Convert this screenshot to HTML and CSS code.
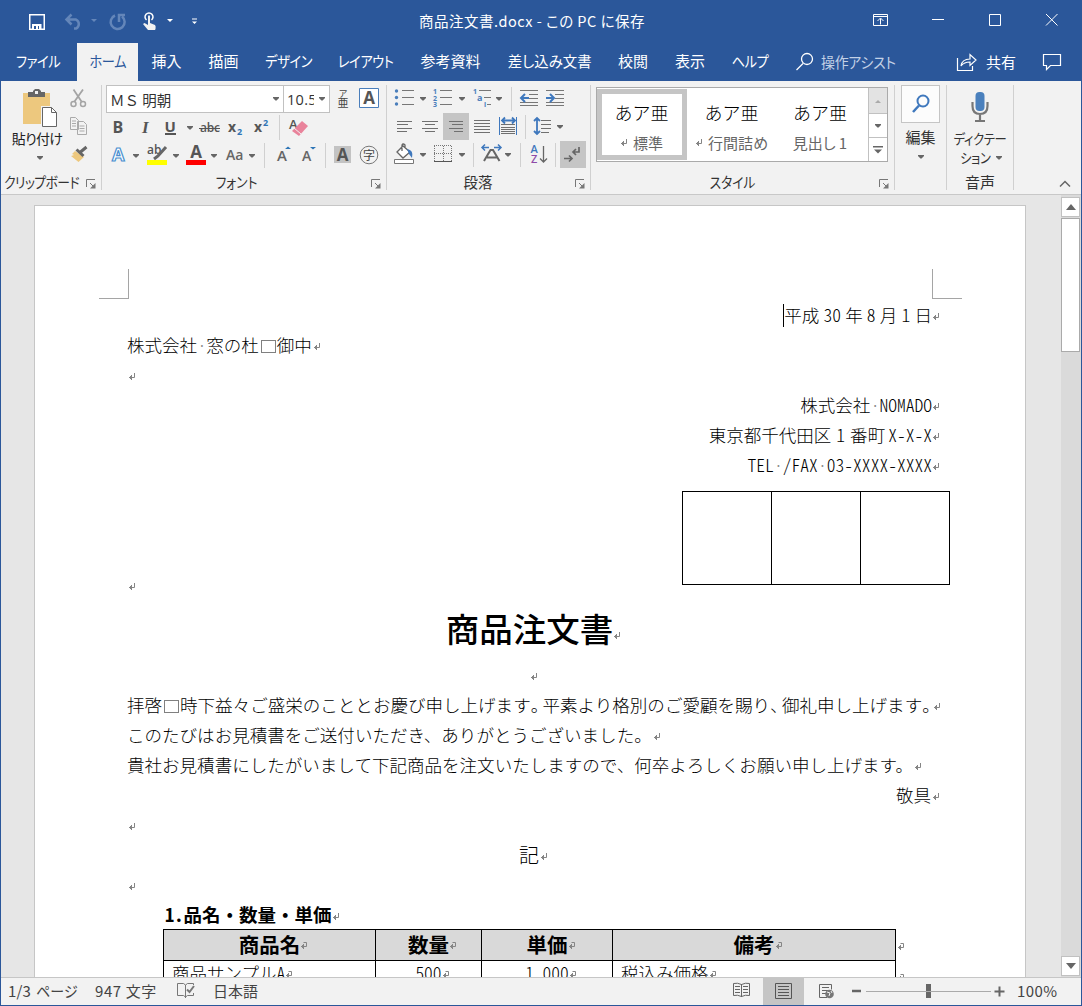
FILE: index.html
```
<!DOCTYPE html>
<html lang="ja">
<head>
<meta charset="utf-8">
<title>商品注文書.docx</title>
<link rel="stylesheet" href="styles.css">
</head>
<body>
<svg class="defs" width="0" height="0">
  <symbol id="ret" viewBox="0 0 8 8"><path d="M6.500 0V4.500H1M3.500 2v5M2.500 3v3" fill="none" stroke="#858585"/></symbol>
  <symbol id="cellret" viewBox="0 0 8 8"><path d="M3.500 .5h3v4H1M3.500 2v5M2.500 3v3" fill="none" stroke="#858585"/></symbol>
  <symbol id="dd" viewBox="0 0 6 4"><path d="M0 0h6v1L3.6 3.5H2.4L0 1z" fill="#666"/></symbol>
  <symbol id="launch" viewBox="0 0 10 10"><path d="M.5 8V.5H9M4 4l4 4" fill="none" stroke="#777"/><path d="M9.500 4v5.500H4z" fill="#777"/></symbol>
</svg>
<div class="window">
  <header class="titlebar">
    <svg width="400" height="43" viewBox="1 0 400 43" fill="none">
      <path d="M29.750 14.750h14.500v14.500h-14.500z" stroke="#fff" stroke-width="1.500"/><path d="M32 24h9.500v5.500H32z" fill="#fff"/><path d="M34 26h2v3h-2zM38 26h1v3h-1z" fill="#2b579a"/>
      <g stroke="#6486b9" stroke-width="2.500"><path d="M67 19.500h9a5 5 0 0 1 0 9h-2M71.500 14.500l-5 5 5 5"/><path d="M115 15.500a7 7 0 1 0 7 1M119 22v-7h6"/></g>
      <path d="M91 19h6l-3 3z" fill="#6486b9"/>
      <path d="M146.500 20a4 4 0 1 1 5 0" stroke="#fff" stroke-width="1.500"/><path d="M148 16q1-1.500 2 0v7l5 2q1 1 .5 4l-.5 1h-7l-5-6 1.500-1 3.500 2z" fill="#f2f2f2"/>
      <path d="M167 19h6l-3 3zM192 21.500h5l-2.500 2.500zM192 18.500h5v1h-5z" fill="#fff"/>
    </svg>
    <span class="doc-name">商品注文書.docx - この PC に保存</span>
    <svg width="219" height="43" viewBox="862 0 219 43" fill="none" stroke="#fff"><path d="M873.500 14.500h14v11h-14zM873.500 16.500h14M880.500 24.500v-6M877.500 21l3-3 3 3M932 19.500h12M989.500 14.500h11v11h-11zM1046 14l11.500 11.500M1057.500 14l-11.500 11.500"/></svg>
  </header>
  <nav class="tabs">
    <span class="tab t-file"><span class="k">ファイル</span></span><span class="tab t-home"><span class="k">ホーム</span></span><span class="tab t-2">挿入</span><span class="tab t-2">描画</span><span class="tab t-design"><span class="k">デザイン</span></span><span class="tab t-layout"><span class="k">レイアウト</span></span><span class="tab t-ref">参考資料</span><span class="tab t-mail"><span class="k w">差し込み文書</span></span><span class="tab t-review">校閲</span><span class="tab t-view">表示</span><span class="tab t-help"><span class="k">ヘルプ</span></span>
    <span class="assist"><svg width="20" height="20" fill="none" stroke="#fff" stroke-width="1.300"><circle cx="12" cy="7" r="5.500"/><path d="M8 11.500L1.500 18"/></svg><span class="k lft">操作アシスト</span></span>
    <span class="share"><svg width="21" height="20" fill="none" stroke="#fff" stroke-width="1.200"><path d="M1.500 6v12.500h15V14"/><path d="M5 14q1-7 9-7V2.500l6 5.500-6 5.500V10q-6 0-9 4z"/></svg><span>共有</span></span>
    <svg class="comment" width="20" height="18" fill="none" stroke="#fff" stroke-width="1.200"><path d="M1.500 1.500h17v11h-10l-4 4v-4h-3z"/></svg>
  </nav>

  <section class="ribbon">
    <div class="group g-clip">
      <div class="clip-body">
        <div class="paste">
          <svg width="38" height="40" viewBox="22 88 38 40"><path d="M24 93h27v31H24z" fill="#edc87e"/><path d="M29 92h5v-1l2-2h4l2 2v1h4v5H29z" fill="#666"/><path d="M36 91h3v3h-3z" fill="#f2f2f2"/><path d="M42 106h11l6 6v16H42z" fill="#f2f2f2"/><path d="M43.500 107.500h9l5 5v14h-14z" fill="#fff" stroke="#666"/><path d="M52.500 107.500v5h5" fill="none" stroke="#666"/></svg>
          <span class="paste-label">貼り付け</span>
          <svg width="6" height="4"><use href="#dd"/></svg>
        </div>
        <svg width="20" height="84" viewBox="69 85 20 84" fill="none">
          <g stroke="#a4a4a4" stroke-width="1.800"><path d="M73.500 89.500l8 12M83 89.500l-8.500 12"/><circle cx="73.500" cy="104" r="2.500" stroke-width="1.500"/><circle cx="83" cy="104" r="2.500" stroke-width="1.500"/></g>
          <path d="M70.500 117.500h5l3 3v9h-8zM77.500 121.500h6l3 3v10h-9z" stroke="#aaa" fill="#f2f2f2"/><path d="M72 121h4M72 123.500h4M72 126h4M79.500 126h5M79.500 128.500h5M79.500 131h5" stroke="#aaa"/>
          <path d="M75 151l9 6-5.500 5-7.500-6 3-1-2-1z" fill="#edc87e"/><path d="M76.500 149.500l7 6.500M80.500 152l6-5" stroke="#666" stroke-width="3"/>
        </svg>
      </div>
      <div class="caption"><span class="k">クリップボード</span><svg width="10" height="10"><use href="#launch"/></svg></div>
    </div>

    <div class="group g-font">
      <div class="row">
        <span class="combo name"><span>ＭＳ 明朝</span><svg width="6" height="4"><use href="#dd"/></svg></span><span class="combo size"><span class="num">10.5</span><svg width="6" height="4"><use href="#dd"/></svg></span>
        <svg width="56" height="28" viewBox="330 85 56 28"><g class="jp" text-anchor="middle" fill="#444"><text x="343" y="97" font-size="9">ア</text><text x="343" y="107" font-size="11">亜</text></g><path d="M359.500 88.500h19v19h-19z" fill="#fff" stroke="#4a7ebb"/><text class="ui b" x="369" y="104" font-size="17" text-anchor="middle" fill="#555">A</text></svg>
      </div>
      <div class="row">
        <svg width="284" height="28" viewBox="102 113 284 28">
          <g fill="#555"><text class="ui b" x="112.500" y="133" font-size="16">B</text><text class="serif b i" x="142" y="133" font-size="17">I</text><text class="ui b" x="164.500" y="132" font-size="15">U</text><path d="M165 133h11v2h-11z"/>
          <text class="ui b2" x="200" y="132" font-size="12" textLength="20">abc</text><path d="M199 128h21v1h-21z"/><text class="ui b" x="228" y="132" font-size="14">x</text><text class="ui b" x="254" y="132" font-size="14">x</text></g>
          <g fill="#2e75b6"><text class="ui b" x="237" y="135" font-size="9">2</text><text class="ui b" x="263" y="126" font-size="9">2</text></g>
          <use href="#dd" x="187" y="126" width="6" height="4"/><path d="M279.500 115v25" stroke="#d0d0d0"/>
          <text class="ui b2" x="289" y="129" font-size="13" fill="#555">A</text><path d="M302 121l6 5-9 10-7-5z" fill="#e9839b"/><path d="M294 128l7 6" stroke="#f2f2f2"/>
        </svg>
      </div>
      <div class="row">
        <svg width="284" height="28" viewBox="102 141 284 28">
          <text class="ui b" x="112" y="161" font-size="18" fill="#fff" stroke="#4a90d0" stroke-width="1.200">A</text>
          <text class="ui b2" x="147" y="154" font-size="12" fill="#555">ab</text><path d="M166 147l-8 9-4 3" stroke="#666" stroke-width="3" fill="none"/><path d="M147 160h20v5h-20z" fill="#ff0"/>
          <text class="ui b" x="196" y="158" font-size="17" text-anchor="middle" fill="#555">A</text><path d="M186 160h20v5h-20z" fill="red"/>
          <text class="ui b2" x="226" y="160" font-size="14" fill="#666">Aa</text>
          <use href="#dd" x="133" y="154" width="6" height="4"/><use href="#dd" x="173" y="154" width="6" height="4"/><use href="#dd" x="211" y="154" width="6" height="4"/><use href="#dd" x="249" y="154" width="6" height="4"/>
          <path d="M264.500 143v25M325.500 143v25" stroke="#d0d0d0"/>
          <g class="ui b2" fill="#666"><text x="277" y="161" font-size="15">A</text><text x="302" y="161" font-size="14">A</text></g><path d="M285 149l3-2.500 3 2.500zM310 147h6l-3 2.500z" fill="#2e75b6"/>
          <path d="M334 146h17v17h-17z" fill="#c3c3c3"/><text class="ui b" x="342.500" y="160.500" font-size="17" text-anchor="middle" fill="#555">A</text>
          <circle cx="369" cy="155" r="8.800" fill="none" stroke="#777"/><text class="jp" x="369" y="159.500" font-size="12" text-anchor="middle" fill="#444">字</text>
        </svg>
      </div>
      <div class="caption"><span class="k">フォント</span><svg width="10" height="10"><use href="#launch"/></svg></div>
    </div>

    <div class="group g-para">
      <div class="row">
        <svg width="203" height="28" viewBox="387 85 203 28">
          <g fill="#4a7ebb"><circle cx="396.500" cy="91" r="1.700"/><circle cx="396.500" cy="97.500" r="1.700"/><circle cx="396.500" cy="104" r="1.700"/><g class="ui b" font-size="7"><text x="433" y="94">1</text><text x="433" y="100.500">2</text><text x="433" y="107">3</text><text x="473" y="94">1</text><text x="477" y="101" font-size="9">a</text><text x="484" y="107">i</text></g></g>
          <path d="M402 90.500h12M402 97.500h12M402 104.500h12M440 90.500h12M440 97.500h12M440 104.500h12M479 90.500h12M484 97.500h7M487 104.500h4M520 90.500h18M529 94.500h9M529 98.500h9M520 102.500h18M520 105.500h18M546 90.500h18M555 94.500h9M555 98.500h9M546 102.500h18M546 105.500h18" stroke="#777"/>
          <path d="M529 98h-8M525 94l-4 4 4 4M546 98h8M550 94l4 4-4 4" fill="none" stroke="#3f78bd" stroke-width="2"/>
          <use href="#dd" x="420" y="97" width="6" height="4"/><use href="#dd" x="459" y="97" width="6" height="4"/><use href="#dd" x="496" y="97" width="6" height="4"/><path d="M511.500 87v24" stroke="#d0d0d0"/>
        </svg>
      </div>
      <div class="row">
        <svg width="203" height="28" viewBox="387 113 203 28">
          <path d="M443 113h26v27h-26z" fill="#c5c5c5"/>
          <path d="M397 121.500h15M397 124.500h11M397 128.500h15M397 131.500h10M422 121.500h16M425 124.500h10M422 128.500h16M425 131.500h10M449 121.500h14M452 124.500h11M449 128.500h14M454 131.500h9M474 120.500h16M474 123.500h16M474 126.500h16M474 129.500h16M474 132.500h16M501 124.500h14M501 127.500h14M501 129.500h14M501 131.500h14M501 133.500h14M541 120.500h10M541 124.500h10M541 128.500h10M541 132.500h8" stroke="#707070"/>
          <path d="M499.500 117v18M516.500 117v18" stroke="#3f78bd"/><path d="M503 120.500h11M505 117.500l-3 3 3 3M512 117.500l3 3-3 3M537 118v15M534 121l3-3 3 3M534 131l3 3 3-3" fill="none" stroke="#3f78bd" stroke-width="1.800"/>
          <path d="M525.500 115v24" stroke="#d0d0d0"/><use href="#dd" x="557" y="125" width="6" height="4"/>
        </svg>
      </div>
      <div class="row">
        <svg width="203" height="28" viewBox="387 141 203 28">
          <path d="M394.500 159.500h19v4h-19z" fill="#fff" stroke="#777"/><path d="M397 152l6-6 7 6-7 6zM402 151v-6q1-2 3 0v2" fill="#fff" stroke="#666" stroke-width="1.300"/><path d="M407 149q7 1 5 9l-3-4z" fill="#3f78bd"/>
          <path d="M434.500 146v16M443.500 146v16M451.500 146v16M434 145.500h18M434 153.500h18" stroke="#777" stroke-dasharray="1 1" fill="none"/><path d="M434 161.500h18" stroke="#555"/>
          <path d="M484 161l6.500-11h2.500l6.500 11M487 157.500h10" fill="none" stroke="#666" stroke-width="2"/><path d="M482 147.500h7M485 144.500l-3 3 3 3M494 147.500h7M498 144.500l3 3-3 3" fill="none" stroke="#3f78bd" stroke-width="1.500"/>
          <text class="ui b2" x="530.500" y="153" font-size="11" fill="#3f78bd">A</text><text class="ui b2" x="531" y="163" font-size="11" fill="#8e4ba8">Z</text><path d="M543.500 146v16M540 158.500l3.500 3.500 3.500-3.500" fill="none" stroke="#666" stroke-width="1.300"/>
          <path d="M560 141h26v27h-26z" fill="#c5c5c5"/><path d="M579 147v5h-6M576 149l-3 3 3 3M564 158.500h7M569 155.500l3 3-3 3" fill="none" stroke="#666" stroke-width="1.700"/>
          <use href="#dd" x="420" y="153" width="6" height="4"/><use href="#dd" x="459" y="153" width="6" height="4"/><use href="#dd" x="505" y="153" width="6" height="4"/><path d="M473.500 143v24M520.500 143v24M555.500 143v24" stroke="#d0d0d0"/>
        </svg>
      </div>
      <div class="caption"><span>段落</span><svg width="10" height="10"><use href="#launch"/></svg></div>
    </div>

    <div class="group g-style">
      <div class="gallery">
        <div class="style-item on"><b>あア亜</b><span><svg width="8" height="8"><use href="#ret"/></svg>標準</span></div>
        <div class="style-item"><b>あア亜</b><span><svg width="8" height="8"><use href="#ret"/></svg>行間詰め</span></div>
        <div class="style-item"><b>あア亜</b><span>見出し 1</span></div>
        <div class="gal-nav"><i class="off"><svg width="6" height="4"><path d="M0 4h6L3 1z" fill="#aaa"/></svg></i><i><svg width="6" height="4"><use href="#dd"/></svg></i><i><svg width="10" height="8"><path d="M0 0h10v1.500H0zM1 3.500h8L5 7.500z" fill="#666"/></svg></i></div>
      </div>
      <div class="caption"><span class="k">スタイル</span><svg width="10" height="10"><use href="#launch"/></svg></div>
    </div>

    <div class="group g-edit">
      <span class="edit-box"><svg width="20" height="20" fill="none" stroke="#3f78bd" stroke-width="2"><circle cx="12" cy="7" r="5.500"/><path d="M8 11.500L2 18" stroke-width="2.500"/></svg></span>
      <span class="edit-label">編集</span><svg width="6" height="4"><use href="#dd"/></svg>
    </div>

    <div class="group g-voice">
      <svg width="18" height="31" viewBox="972 92 18 31" fill="none"><rect x="976.500" y="92" width="9" height="19" rx="4" fill="#4a80bd"/><path d="M973.500 102v4q0 8 7.500 8t7.500-8v-4M981 114v8M976 121h10" stroke="#777" stroke-width="2.200"/></svg>
      <span class="dict"><span class="k">ディクテー</span></span>
      <span class="dict second"><span class="k">ション</span><svg width="6" height="4"><use href="#dd"/></svg></span>
      <div class="caption"><span>音声</span></div>
    </div>
    <svg class="collapse" width="12" height="8" fill="none" stroke="#666" stroke-width="1.500"><path d="M1 6.500l5-5 5 5"/></svg>
  </section>

  <main class="workspace">
    <article class="page">
      <div class="corners"><i class="corner-l"></i><i class="corner-r"></i></div>
      <div class="text">
        <p class="r"><span class="caret"></span><span>平成<span class="half gap">30</span>年<span class="half gap">8</span>月<span class="half gap">1</span>日</span><svg class="m"><use href="#ret"/></svg></p>
        <p>株式会社<i class="dot">·</i>窓の杜<i class="fullspace"></i>御中<svg class="m far"><use href="#ret"/></svg></p>
        <p><svg class="m"><use href="#ret"/></svg></p>
        <p class="r">株式会社<i class="dot">·</i><span class="half">NOMADO</span><svg class="m"><use href="#ret"/></svg></p>
        <p class="r">東京都千代田区<span class="half gap one">1</span>番町<span class="half xs">X-X-X</span><svg class="m"><use href="#ret"/></svg></p>
        <p class="r"><span class="half">TEL</span><i class="dot">·</i><span class="half">/FAX</span><i class="dot">·</i><span class="half">03-XXXX-XXXX</span><svg class="m"><use href="#ret"/></svg></p>
        <div class="stamp-row"><p><svg class="m"><use href="#ret"/></svg></p><div class="stamps"><i></i><i></i><i></i></div></div>
        <h1>商品注文書<svg class="m"><use href="#ret"/></svg></h1>
        <p class="c"><svg class="m"><use href="#ret"/></svg></p>
        <p>拝啓<i class="fullspace"></i>時下益々ご盛栄のこととお慶び申し上げます<span class="tight">。</span>平素より格別のご愛顧を賜り<span class="tight">、</span>御礼申し上げます<span class="tight last">。</span><svg class="m"><use href="#ret"/></svg></p>
        <p>このたびはお見積書をご送付いただき、ありがとうございました。<svg class="m"><use href="#ret"/></svg></p>
        <p>貴社お見積書にしたがいまして下記商品を注文いたしますので、何卒よろしくお願い申し上げます。<svg class="m"><use href="#ret"/></svg></p>
        <p class="r">敬具<svg class="m"><use href="#ret"/></svg></p>
        <p><svg class="m"><use href="#ret"/></svg></p>
        <p class="c ki">記<svg class="m"><use href="#ret"/></svg></p>
        <p><svg class="m"><use href="#ret"/></svg></p>
        <h2><span class="half">1.</span>品名・数量・単価<svg class="m"><use href="#ret"/></svg></h2>
        <div class="items">
          <div class="th">商品名<svg class="m"><use href="#cellret"/></svg></div><div class="th">数量<svg class="m"><use href="#cellret"/></svg></div><div class="th">単価<svg class="m"><use href="#cellret"/></svg></div><div class="th">備考<svg class="m"><use href="#cellret"/></svg></div><div class="end"><svg class="m"><use href="#cellret"/></svg></div>
          <div class="td left">商品サンプル<span class="half">A</span><svg class="m"><use href="#cellret"/></svg></div><div class="td"><span class="half">500</span><svg class="m"><use href="#cellret"/></svg></div><div class="td"><span class="half">1,000</span><svg class="m"><use href="#cellret"/></svg></div><div class="td left">税込み価格<svg class="m"><use href="#cellret"/></svg></div><div class="end"><svg class="m"><use href="#cellret"/></svg></div>
        </div>
      </div>
    </article>
    <aside class="scroll">
      <i class="sb"><svg width="10" height="6"><path d="M0 6h10L5 0z" fill="#666"/></svg></i>
      <i class="thumb"></i>
      <i class="sb down"><svg width="10" height="6"><path d="M0 0h10L5 6z" fill="#666"/></svg></i>
    </aside>
  </main>

  <footer class="status">
    <span class="s-page"><span>1/3</span><span class="k lft">ページ</span></span><span class="s-words">947 文字</span>
    <svg class="proof" width="20" height="18" fill="none" stroke="#777"><path d="M9.500 3v13M9.500 3l-2-1.500h-6v12h6l2 1.500 2-1.500h6V11M9.500 3l2-1.500h6V3"/><path d="M11 7.500l2.500 2.500L18 4" stroke-width="2"/></svg>
    <span class="s-lang">日本語</span>
    <svg class="views" width="280" height="27" viewBox="730 978 280 27" fill="none">
      <path d="M763 978h41v27h-41z" fill="#c5c5c5"/>
      <path d="M741.500 984v13M741.500 984.500q-4-2-8-1v12q4-1 8 1 4-2 8-1v-12q-4-1-8 1M735 986.500h5M735 989.500h5M735 992.500h5M743 986.500h5M743 989.500h5M743 992.500h5" stroke="#666"/>
      <path d="M775.500 983.500h16v15h-16zM778 986.500h11M778 989.500h11M778 992.500h11M778 995.500h11" stroke="#555"/>
      <path d="M827 997.500h-7.500v-13h12v5M822 987.500h7M822 990.500h6M822 993.500h4" stroke="#666"/><circle cx="829.500" cy="994" r="4.300" fill="#777"/><path d="M827 992l3 1-1 3M831 991l1 2" stroke="#f2f2f2"/>
      <path d="M852 991h9" stroke="#666" stroke-width="2.500"/><path d="M867 991.500h96" stroke="#aaa"/><path d="M926 984h5v14h-5z" fill="#666"/>
      <path d="M866 991.500h125" stroke="#aaa"/><path d="M994.500 991.500h10M999.500 986.500v10" stroke="#666" stroke-width="2"/>
    </svg>
    <span class="zoom">100%</span>
  </footer>
</div>
</body>
</html>
```
FILE: styles.css
```
* { box-sizing: border-box; }
body { margin: 0; font-family: "Noto Sans CJK JP", sans-serif; font-size: 15px; color: #333; overflow: hidden; }
i { font-style: normal; }
p, h1, h2 { margin: 0; font-weight: inherit; }
svg { display: block; flex: none; }
.defs { position: absolute; }
.window { width: 1082px; height: 1006px; border: solid #2b579a; border-width: 0 1px 1px; display: flex; flex-direction: column; background: #f2f2f2; }
.ui { font-family: "Open Sans", sans-serif; }
.jp { font-family: "Noto Sans CJK JP", sans-serif; }
.serif { font-family: "Liberation Serif", serif; }
.b { font-weight: 700; }
.b2 { font-weight: 600; }
.i { font-style: italic; }
/* condensed kana, as in the system UI face */
.k { display: inline-block; transform: scaleX(.88); }
.k.w { transform: scaleX(.96); }
.k.lft { transform: scaleX(.93); transform-origin: left; }

.titlebar { height: 43px; flex: none; background: #2b579a; color: #fff; display: flex; justify-content: space-between; }
.doc-name { line-height: 41px; font-size: 14.5px; font-feature-settings: "palt"; letter-spacing: .5px; white-space: nowrap; margin: 0 auto 0 18px; }

.tabs { height: 38px; flex: none; background: #2b579a; color: #fff; display: flex; line-height: 36px; white-space: nowrap; }
.tab { text-align: center; font-feature-settings: "palt"; }
.t-file { width: 75px; }
.t-home { width: 61px; margin-left: 1px; background: #f2f2f2; color: #2b579a; }
.t-2 { width: 57px; }
.t-design { width: 73px; }
.t-layout { width: 82px; }
.t-ref { width: 87px; }
.t-mail { width: 111px; }
.t-review { width: 56px; }
.t-view { width: 58px; }
.t-help { width: 62px; }
.t-design, .t-layout, .t-file, .t-home, .t-help { letter-spacing: -.4px; }
.assist { display: flex; gap: 6px; align-items: center; margin-left: 14px; color: #c3d1e6; font-feature-settings: "palt"; letter-spacing: -.3px; }
.share { display: flex; gap: 9px; align-items: center; margin-left: auto; }
.comment { margin: 10px 19px 0 26px; }

.ribbon { height: 114px; flex: none; background: #f2f2f2; border-bottom: 1px solid #c8c8c8; display: flex; padding-top: 4px; font-feature-settings: "palt"; }
.group { height: 105px; border-right: 1px solid #d0d0d0; display: flex; flex-direction: column; }
.row { display: flex; height: 28px; flex: none; }
.caption { display: flex; margin-top: auto; height: 16px; align-items: center; line-height: 14px; font-size: 14.500px; color: #333; white-space: nowrap; }
.caption span { flex: 1; text-align: center; }
.caption svg { margin: 3px 5px 0 0; }
.g-clip { width: 101px; }
.g-clip .caption span { letter-spacing: -.6px; margin-left: -4px; }
.clip-body { display: flex; }
.paste { width: 68px; display: flex; flex-direction: column; align-items: center; padding: 3px 0 0 10px; }
.paste-label { font-size: 14px; line-height: 21px; height: 28px; letter-spacing: -.7px; white-space: nowrap; color: #222; margin-left: -6px; }
.g-font { width: 285px; }
.combo { height: 28px; background: #fff; border: 1px solid #c1c1c1; display: flex; align-items: center; justify-content: space-between; font-size: 14.5px; line-height: 25px; padding: 0 4px 0 3px; }
.combo.name { width: 178px; margin-left: 4px; font-feature-settings: normal; }
.combo.size { width: 46px; border-left: 0; }
.num { width: 27px; overflow: hidden; font-family: "Open Sans", sans-serif; letter-spacing: .3px; }
.g-para { width: 204px; }
.g-para .caption span { margin-left: -6px; }
.g-style { width: 304px; padding: 2px 0 0 5px; }
.gallery { width: 292px; height: 75px; border: 1px solid #aaa; display: flex; background: #fff; }
.style-item { width: 90px; display: flex; flex-direction: column; align-items: center; padding: 8px 1px 0 0; margin: 1px 0; border: 5px solid transparent; white-space: nowrap; }
.style-item.on { border-color: #c5c5c5; }
.style-item b { font-weight: 300; font-size: 18px; line-height: 18px; margin-top: 1px; color: #000; font-feature-settings: normal; }
.style-item span { font-size: 15px; line-height: 18px; margin-top: 13px; color: #666; display: flex; align-items: center; gap: 5px; }
.style-item + .style-item + .style-item { padding-right: 4px; }
.gal-nav { margin-left: auto; width: 19px; border-left: 1px solid #c1c1c1; }
.gal-nav i { display: flex; height: 24px; align-items: center; justify-content: center; border-bottom: 1px solid #c1c1c1; }
.gal-nav .off { background: #e3e3e3; height: 26px; }
.gal-nav i:last-child { border: 0; }
.g-style .caption { margin-left: -10px; }
.g-edit { width: 52px; align-items: center; }
.edit-box { width: 39px; height: 38px; border: 1px solid #c5c5c5; background: #fcfcfc; display: flex; align-items: center; justify-content: center; }
.edit-label { line-height: 28px; height: 32px; }
.g-voice { width: 67px; align-items: center; padding-top: 7px; }
.dict { line-height: 19px; font-size: 14px; letter-spacing: -.4px; margin-top: 6px; white-space: nowrap; }
.dict.second { margin-top: 0; display: flex; align-items: center; gap: 3px; }
.g-voice .caption { font-size: 15px; }
.collapse { margin: 95px 0 0 45px; }

.workspace { height: 783px; flex: none; background: #e6e6e6; display: flex; overflow: hidden; border-bottom: 1px solid #c6c6c6; }
.page { width: 992px; height: 900px; margin: 10px 0 0 33px; background: #fff; border: 1px solid #c6c6c6; padding-top: 63px; flex: none; }
.corners { display: flex; justify-content: space-between; padding: 0 63px 0 64px; height: 30px; }
.corners i { width: 30px; border: 0 solid #a5a5a5; border-bottom-width: 1px; }
.corners .corner-l { border-right-width: 1px; }
.corners .corner-r { border-left-width: 1px; }
.text { padding: 1px 85px 0 92px; color: #000; font-size: 17.550px; font-weight: 300; }
.text p { display: flex; align-items: center; height: 30px; line-height: 28px; white-space: nowrap; }
.m { width: 8px; height: 8px; margin: 4px 0 0 0; align-self: center; }
.m.far { margin-left: 1px; }
.text p > .m:first-child { margin-left: 1px; }
.text .r { justify-content: flex-end; }
.text .c { justify-content: center; }
.half { font-feature-settings: "hwid"; }
.gap { margin: 0 4.200px; }
.gap.one { margin: 0 5px; }
.xs { margin-left: 3px; }
.caret { width: 1px; height: 23px; background: #000; }
.dot { width: 9px; text-align: center; color: #888; }
.fullspace { flex: none; width: 15px; height: 13px; border: 1px solid #808080; margin: 2px 1px 0 2px; }
.tight { letter-spacing: -5.700px; }
.tight.last { letter-spacing: -7px; }
.stamp-row { display: flex; justify-content: space-between; height: 120px; }
.stamp-row p { margin-top: 90px; }
.stamps { display: flex; height: 94px; margin: 11px -10px 0 0; border: 1px solid #000; border-right: 0; }
.stamps i { width: 89px; border-right: 1px solid #000; }
h1 { height: 60px; display: flex; justify-content: center; align-items: center; font-size: 33.500px; line-height: 55px; padding-bottom: 5px; font-weight: 500; }
h1 .m { margin-top: 17px; }
.text .ki { font-size: 20px; }
h2 { height: 29px; padding-left: 38px; display: flex; align-items: center; font-size: 18.500px; line-height: 27px; font-weight: 700; }
.items { margin-left: 36px; display: grid; grid-template-columns: 213px 106px 131px 283px 20px; grid-template-rows: 31px 32px; }
.items > div { display: flex; align-items: center; justify-content: center; border: 1px solid #000; border-left-width: 0; border-bottom: 0; line-height: 20px; }
.items > div:nth-child(5n+1) { border-left-width: 1px; }
.items > .th { background: #d9d9d9; font-size: 20.500px; font-weight: 700; padding: 0 0 3px 8px; }
.items > .td { font-size: 17.500px; padding: 0 0 8px 8px; }
.items > .left { justify-content: flex-start; padding-left: 8px; }
.items > .end { border: 0; justify-content: flex-start; padding-left: 1px; }
.scroll { margin-left: auto; width: 20px; background: #dadada; display: flex; flex-direction: column; padding: 2px 1px 1px 0; }
.sb { display: flex; height: 20px; background: #fff; border: 1px solid #c1c1c1; align-items: center; justify-content: center; }
.thumb { margin-top: 1px; height: 134px; background: #fff; border: 1px solid #aaa; }
.down { margin-top: auto; }

.status { flex: 1; display: flex; line-height: 25px; font-size: 15px; color: #444; font-feature-settings: "palt"; white-space: nowrap; }
.s-page { width: 94px; padding-left: 7px; display: flex; gap: 5px; letter-spacing: .1px; }
.s-words { width: 81px; letter-spacing: .6px; }
.proof { margin-top: 4px; }
.s-lang { padding-left: 17px; }
.views { margin-left: auto; }
.zoom { width: 71px; padding-left: 7px; letter-spacing: .4px; }
```
